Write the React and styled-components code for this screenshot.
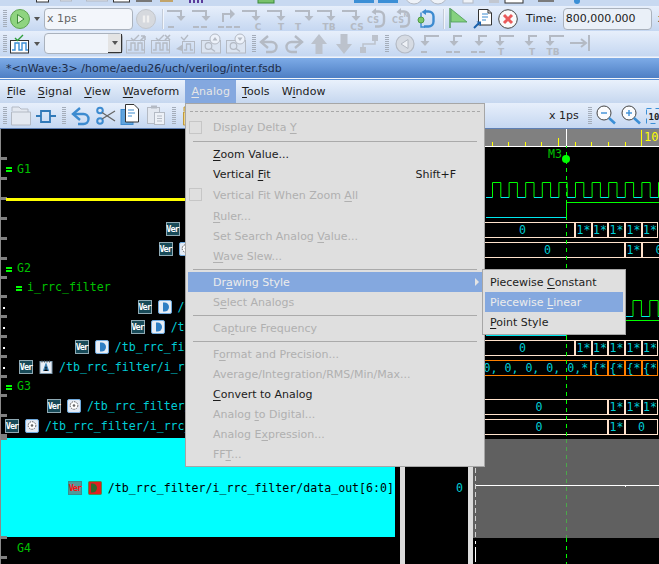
import styled, { createGlobalStyle } from "styled-components";

const GRAY = "#b4bac4";
const BLUE = "#3d8bd0";
const CYAN = "#00cdd6";
const PEACH = "#ffe2cc";
const ORANGE = "#ff7f00";
const GREEN = "#00ff00";
const MONO = '"DejaVu Sans Mono", monospace';

const GlobalStyle = createGlobalStyle`
  html, body { margin: 0; padding: 0; background: #000; }
  body { font-family: "DejaVu Sans", sans-serif; }
`;

const Page = styled.div`
  position: relative;
  width: 659px;
  height: 564px;
  overflow: hidden;
  display: flex;
  flex-direction: column;
  background: #dce6f6;
  font-size: 11px;
  color: #1c1c1c;
`;

const ClippedBar = styled.div`
  flex: none;
  height: 6px;
  overflow: hidden;
  background: #c8d9f1;
  svg { display: block; }
`;

const ToolRow = styled.div`
  flex: none;
  height: 25px;
  display: flex;
  align-items: center;
  gap: 3px;
  padding-left: 3px;
  overflow: hidden;
  background: linear-gradient(#e7effb, #c5d7f1);
`;

const IconGroup = styled.div`
  flex: none;
  display: flex;
  align-items: center;
  gap: 5px;
  svg { display: block; flex: none; width: 20px; height: 20px; overflow: visible; }
`;

const Grip = styled.div`
  flex: none;
  width: 4px;
  height: 18px;
  margin-right: ${(p) => p.$mr || 0}px;
  margin-left: ${(p) => p.$ml || 0}px;
  background: repeating-linear-gradient(#a4adba 0 1px, transparent 1px 2px);
`;

const Divider = styled.div`
  flex: none;
  width: 2px;
  height: 20px;
  margin-left: 3px;
  background: #f2f6fc;
  border-left: 1px solid #c4ccd8;
  box-sizing: border-box;
`;

const DropCaret = styled.div`
  flex: none;
  width: 0;
  height: 0;
  margin: 0 1px;
  border-left: 3.5px solid transparent;
  border-right: 3.5px solid transparent;
  border-top: 4px solid #555;
`;

const Field = styled.div`
  flex: none;
  box-sizing: border-box;
  width: ${(p) => p.$w}px;
  height: 22px;
  padding: 0 2px;
  display: flex;
  align-items: center;
  border: 1px solid #aab2bd;
  border-radius: 4px;
  background: ${(p) => (p.$muted ? "#f3f6fb" : "#eaf0f8")};
  color: ${(p) => (p.$muted ? "#666" : "#222")};
  font-size: 11px;
  margin-left: ${(p) => p.$ml || 0}px;
`;

const Combo = styled(Field)`
  justify-content: flex-end;
  padding: 0;
  height: 21px;
  background: #f0f4fa;
`;

const ComboButton = styled.div`
  width: 14px;
  height: 19px;
  display: flex;
  align-items: center;
  justify-content: center;
  background: #e4e4e4;
  border-right: 1px solid #333;
  border-bottom: 1px solid #333;
  box-sizing: border-box;
`;

const ToolLabel = styled.span`
  flex: none;
  margin-left: ${(p) => p.$ml || 0}px;
  font-size: 11px;
  color: #222;
`;

const TitleBar = styled.div`
  flex: none;
  height: 22px;
  box-sizing: border-box;
  margin-top: 1px;
  padding-left: 6px;
  display: flex;
  align-items: center;
  border-top: 1px solid #f0f4fa;
  border-bottom: 1px solid #f4f7fc;
  background: linear-gradient(#7dabe7, #4e7fc4);
  color: #1d2c47;
  font-size: 11px;
  box-shadow: 0 1px 0 #5b8fd4;
`;

const MenuBar = styled.div`
  flex: none;
  height: 23px;
  margin-top: 1px;
  padding-left: 1px;
  display: flex;
  background: linear-gradient(#e9f1fc, #c6d7ef);
`;

const MenuTitle = styled.div`
  padding: 0 6px;
  display: flex;
  align-items: center;
  font-size: 11px;
  letter-spacing: 0.1px;
  background: ${(p) => (p.$open ? "#84a8df" : "transparent")};
  color: ${(p) => (p.$open ? "#e6e6e6" : "#1c1c1c")};
`;

const Workspace = styled.div`
  flex: 1;
  min-height: 0;
  display: grid;
  grid-template-columns: 400px 5px 63px 5px 186px;
  background: #000;
  border-top: 1px solid #5e7fb3;
`;

const SignalPane = styled.div`
  display: flex;
  flex-direction: column;
  padding: 29px 5px 0 0;
  border-left: 1px solid #8a8a8a;
  box-sizing: border-box;
  overflow: hidden;
`;

const SignalRow = styled.div`
  position: relative;
  flex: none;
  box-sizing: border-box;
  height: ${(p) => p.$h || 20}px;
  padding-top: 1px;
  display: flex;
  align-items: center;
  justify-content: ${(p) => (p.$group ? "flex-start" : "flex-end")};
  background: ${(p) => (p.$selected ? "#00ffff" : "transparent")};
  white-space: nowrap;
  font-family: ${MONO};
  font-size: 11.6px;
  color: ${(p) => (p.$selected ? "#000" : CYAN)};
  &::before {
    content: "";
    position: absolute;
    left: 0;
    top: -1px;
    width: 6px;
    height: 3px;
    background: #808080;
  }
  &::after {
    content: "";
    position: absolute;
    left: 2px;
    top: 11px;
    width: 2px;
    height: 2px;
    background: #fff;
    display: ${(p) => (p.$dot ? "block" : "none")};
  }
`;

const SignalName = styled.span`
  margin-right: 1px;
`;

const YellowBar = styled.div`
  position: absolute;
  left: 5px;
  right: 0;
  top: 0;
  height: 3px;
  background: #ffff00;
`;

const GroupName = styled.span`
  color: #00c000;
  padding-left: ${(p) => p.$indent}px;
  display: flex;
  align-items: center;
  gap: 5px;
`;

const GroupMark = styled.i`
  width: 6px;
  height: 5px;
  margin-top: 2px;
  box-sizing: border-box;
  visibility: ${(p) => (p.$hidden ? "hidden" : "visible")};
  border-top: 2px solid ${GREEN};
  border-bottom: 2px solid ${GREEN};
`;

const VerBadge = styled.span`
  flex: none;
  box-sizing: border-box;
  width: 14px;
  height: 14px;
  margin-right: 6px;
  display: flex;
  align-items: center;
  justify-content: center;
  border: 1px solid ${(p) => (p.$selected ? "#3b8f8f" : "#8fa9b3")};
  background: ${(p) => (p.$selected ? "#4f9a9a" : "#184a58")};
  color: ${(p) => (p.$selected ? "#ff1010" : "#fff")};
  font-family: ${MONO};
  font-weight: bold;
  font-size: 8.5px;
  letter-spacing: -1px;
`;

const KindIcon = styled.svg`
  flex: none;
  width: 14px;
  height: 14px;
  margin-right: 6px;
`;

const Sash = styled.div`
  background: #dcdcdc;
`;

const ValuePane = styled.div`
  padding: 309px 5px 0 0;
  font-family: ${MONO};
  font-size: 11.6px;
  color: ${CYAN};
`;

const ValueRow = styled.div`
  height: 100px;
  display: flex;
  align-items: center;
  justify-content: flex-end;
`;

const WaveSvg = styled.svg`
  display: block;
  width: 186px;
  height: 435px;
`;

const Menu = styled.div`
  position: absolute;
  left: ${(p) => p.$left}px;
  top: ${(p) => p.$top}px;
  width: ${(p) => p.$w}px;
  box-sizing: border-box;
  padding: 2px;
  background: #dfdfdf;
  border: 1px solid #a6a6a6;
`;

const TearOff = styled.div`
  height: 6px;
  margin: 0 2px 5px;
  box-sizing: border-box;
  border-bottom: 1px dashed #a8a8a8;
`;

const MenuItem = styled.div`
  position: relative;
  height: ${(p) => p.$h || 20}px;
  padding-left: ${(p) => (p.$sub ? 5 : 25)}px;
  padding-right: 3px;
  display: flex;
  align-items: center;
  justify-content: space-between;
  white-space: nowrap;
  font-size: 11px;
  background: ${(p) => (p.$active ? "#84a8df" : "transparent")};
  color: ${(p) => (p.$active ? "#ececec" : p.$off ? "#b0b0b0" : "#1c1c1c")};
`;

const CheckBox = styled.i`
  position: absolute;
  left: 1px;
  top: 4px;
  width: 13px;
  height: 13px;
  box-sizing: border-box;
  border: 1px solid #c6c6c6;
`;

const Shortcut = styled.span`
  padding-right: 23px;
`;

const SubArrow = styled.i`
  width: 0;
  height: 0;
  border-top: 4px solid transparent;
  border-bottom: 4px solid transparent;
  border-left: 4px solid #e4e4e4;
`;

const MenuRule = styled.div`
  height: ${(p) => p.$h || 6}px;
  margin: 0 5px;
  position: relative;
  &::after {
    content: "";
    position: absolute;
    left: 0;
    right: 0;
    top: ${(p) => p.$at || 3}px;
    height: 1px;
    background: #aaa;
  }
`;

const U = styled.u`
  text-underline-offset: 2px;
`;

// toolbar drawings
const Svg = ({ children }) => <svg viewBox="0 0 20 20" fill="none">{children}</svg>;

const tinyText = { fontFamily: '"DejaVu Sans", sans-serif', fontSize: 9, fontWeight: "bold", fill: GRAY };

const BracketDown = ({ x = 0 }) => (
  <g stroke={GRAY} strokeWidth="2" transform={`translate(${x} 0)`}>
    <path d="M0 2H14V7" />
    <path d="M9.500 7h9L14 12z" fill={GRAY} strokeWidth="0" />
  </g>
);

const Dashes = ({ n }) => (
  <path stroke={GRAY} strokeWidth="2" d={[...Array(n)].map((_, i) => `M${1 + i * 8} 18h6`).join("")} />
);

const DownDash = ({ n }) => <Svg><BracketDown /><Dashes n={n} /></Svg>;
const UpDash = () => (
  <Svg>
    <path d="M6 13V5H14" stroke={GRAY} strokeWidth="2" />
    <path d="M13 0v10l5-5z" fill={GRAY} />
    <Dashes n={3} />
  </Svg>
);
const DownText = ({ t, tx = 10, shift = 0 }) => (
  <Svg>
    <BracketDown x={shift} />
    <text x={tx} y="21" textAnchor="middle" style={tinyText}>{t}</text>
  </Svg>
);
const LoopText = ({ n }) => (
  <Svg>
    <path d="M9 2.500h3a5 5 0 0 1 5 5v5a5 5 0 0 1-5 5H8" stroke={GRAY} strokeWidth="2.400" />
    <path d="M9 -1v7L4.500 3z" fill={GRAY} />
    <text x="6" y="14" textAnchor="middle" style={{ ...tinyText, fontSize: 8 }}>CS</text>
    {n && <text x="14" y="8" textAnchor="middle" style={{ ...tinyText, fontSize: 6 }}>N</text>}
  </Svg>
);
const BlueLoop = () => (
  <Svg>
    <path d="M8 2.500h3.500a5 5 0 0 1 5 5v5a5 5 0 0 1-5 5H7" stroke={BLUE} strokeWidth="2.400" />
    <path d="M9 0v6L4.500 3z" fill={BLUE} />
    <path d="M4 3.500v5M4 14v4h4" stroke={BLUE} strokeWidth="1.400" />
    <circle cx="4" cy="11" r="3" fill="#7cc86a" stroke="#4f9a42" />
  </Svg>
);
const Flag = () => (
  <Svg>
    <path d="M2 -1V19" stroke="#4a9a55" strokeWidth="1.400" />
    <path d="M3 0L19 13H3z" fill="#85d17f" stroke="#4a9a55" strokeWidth=".8" />
  </Svg>
);
const DocArrow = () => (
  <Svg>
    <path d="M5.500 0.500H15l3.500 3.500V16H5.500z" fill="#fff" stroke="#333" />
    <path d="M15 .5V4h3.500" stroke="#333" />
    <path d="M9 5h6M9 8h6M9 11h4" stroke={BLUE} />
    <path d="M1 19l5-5" stroke="#1c62ad" strokeWidth="2" />
    <path d="M3.500 12.500H8V17z" fill="#1c62ad" />
  </Svg>
);
const CloseBadge = () => (
  <Svg>
    <circle cx="10" cy="10" r="9.300" fill="#fafafa" stroke="#444" />
    <path d="M6 6l8 8M14 6l-8 8" stroke="#ea5a5a" strokeWidth="3" />
  </Svg>
);
const PlayBadge = () => (
  <Svg>
    <circle cx="10" cy="10" r="9.500" fill="#8fd480" stroke="#5fa552" />
    <path d="M7.500 5.500L14 10l-6.500 4.500z" fill="#dff3d8" stroke="#3f8a3a" />
  </Svg>
);
const PauseBadge = () => (
  <Svg>
    <circle cx="10" cy="10" r="9.500" fill="#d6d9de" stroke="#c2c6cc" />
    <path d="M8 6.500v7M12 6.500v7" stroke="#f0f0f0" strokeWidth="2.400" />
  </Svg>
);
const pulse = "M2 16h3V9h4v7h3V9h4v7h2";
const WaveCheck = ({ live, extra }) => {
  const line = live ? "#3b8fd6" : GRAY;
  return (
    <Svg>
      <rect x=".5" y="6.500" width="18" height="12.500" fill={live ? "#fff" : "none"} stroke={live ? "#333" : GRAY} />
      <path d={pulse} stroke={line} strokeWidth="1.400" />
      <path d="M5 4l2.500 2.500L13 1" stroke={live ? "#2e9e3a" : GRAY} strokeWidth="1.400" />
      {extra}
    </Svg>
  );
};
const FlyIn = () => (
  <Svg>
    <path d="M5 3l3 3 4-5" stroke={GRAY} strokeWidth="1.300" />
    <rect x="6.500" y="7.500" width="12" height="11.500" stroke={GRAY} />
    <path d="M8 16h2.500V10h4v6H17" stroke={GRAY} strokeWidth="1.300" />
    <path d="M0 15l7-5-1 7z" fill={GRAY} />
  </Svg>
);
const ZoomBox = ({ up }) => (
  <Svg>
    <rect x=".5" y="6.500" width="19" height="12.500" fill="#dbe4f1" stroke={GRAY} />
    <circle cx="7.500" cy="12" r="3.300" stroke={GRAY} strokeWidth="1.200" />
    <path d="M10 14.500l4 3" stroke={GRAY} strokeWidth="1.400" />
    <circle cx="14" cy="5" r="5" fill="#edf2fa" stroke={GRAY} />
    <path d={up ? "M11.500 6.500h5L14 3z" : "M11.500 3.500h5L14 7z"} fill={GRAY} />
  </Svg>
);
const Undo = ({ color = GRAY, flip }) => (
  <Svg>
    <g transform={flip ? "translate(20 0) scale(-1 1)" : undefined}>
      <path d="M3 8h9.500a5 5 0 0 1 0 10H7" stroke={color} strokeWidth="2.400" />
      <path d="M9 2L2 8l7 6" stroke={color} strokeWidth="2.400" />
    </g>
  </Svg>
);
const FatArrow = ({ down }) => (
  <Svg>
    <path transform={down ? "rotate(180 10 10)" : undefined} d="M10 0l8 10h-4.500v10h-7V10H2z" fill="#bcc2cc" />
  </Svg>
);
const StepPath = () => (
  <Svg>
    <rect x="13" y="1" width="6" height="6" fill="#bcc2cc" />
    <rect x="1" y="13" width="6" height="6" fill="#bcc2cc" />
    <path d="M4 13V10H16V7" stroke="#bcc2cc" strokeWidth="1.500" />
  </Svg>
);
const BackCircle = () => (
  <Svg>
    <circle cx="10" cy="10" r="9" fill="#d6dbe3" stroke={GRAY} strokeWidth="1.200" />
    <path d="M13 5.500v9L6 10z" fill="#eef1f6" stroke={GRAY} />
  </Svg>
);
const BracketLeft = ({ dashes, label, short, lx = 6 }) => (
  <Svg>
    <path d={short ? "M17 2H9V7" : "M19 2H5V7"} stroke={GRAY} strokeWidth="2" />
    <path d={short ? "M4.500 7h9L9 12z" : "M.5 7h9L5 12z"} fill={GRAY} />
    {dashes && <Dashes n={dashes} />}
    {label && <text x={lx} y="21" textAnchor="middle" style={tinyText}>{label}</text>}
  </Svg>
);
const ToEnd = () => (
  <Svg>
    <path d="M0 9h15" stroke={GRAY} strokeWidth="2" />
    <path d="M11 5l5 4-5 4" stroke={GRAY} strokeWidth="2" />
    <path d="M19 1v16" stroke={GRAY} strokeWidth="2" />
  </Svg>
);
const Folder = ({ color = GRAY, fill = "#e3e8f0" }) => (
  <Svg>
    <path d="M1 5V1h7l2 2h7v5" stroke={color} fill={fill} />
    <path d="M.5 6h19v13H.5z" fill={fill} stroke={color} />
  </Svg>
);
const StepIcon = () => (
  <Svg>
    <path d="M0 10h5V5h9v5h6M5 10v6h9v-6" stroke="#3179b8" strokeWidth="1.800" />
  </Svg>
);
const Scissors = () => (
  <Svg>
    <circle cx="4" cy="4.500" r="2.800" stroke={BLUE} strokeWidth="2" />
    <circle cx="4" cy="15" r="2.800" stroke={BLUE} strokeWidth="2" />
    <path d="M6 6.500L19 15M6 13L19 5" stroke="#666" strokeWidth="1.300" />
  </Svg>
);
const CopyDoc = () => (
  <Svg>
    <rect x="0" y="3.500" width="12" height="15" fill="#5fa3dd" stroke={BLUE} />
    <path d="M4.500 -1.500H13l4.500 4.500V16H4.500z" fill="#fff" stroke="#333" />
    <path d="M7 4h6M7 7h7M7 10h4" stroke={BLUE} />
  </Svg>
);
const PasteDoc = () => (
  <Svg>
    <rect x="1.500" y="1.500" width="12" height="16" stroke={GRAY} fill="#e3e8f0" />
    <rect x="5" y="-.5" width="6" height="3" fill={GRAY} />
    <rect x="8.500" y="6.500" width="10" height="12" fill="#edf1f7" stroke={GRAY} />
    <path d="M11 10h5M11 12.500h5M11 15h5" stroke={GRAY} />
  </Svg>
);
const Magnifier = ({ plus }) => (
  <Svg>
    <circle cx="8" cy="7" r="7" fill="#fbfcfe" stroke="#444" />
    <path d="M5 7h6" stroke="#3b8fd6" strokeWidth="1.400" />
    {plus && <path d="M8 4v6" stroke="#3b8fd6" strokeWidth="1.400" />}
    <path d="M13 12l6 5.500" stroke="#3b8fd6" strokeWidth="2.600" />
  </Svg>
);
const TenBox = () => (
  <Svg>
    <rect x=".5" y="2.500" width="24" height="15" stroke="#3b8fd6" strokeDasharray="5 4" />
    <text x="2.500" y="14" style={{ fontFamily: MONO, fontSize: 9, fontWeight: "bold", fill: "#222" }}>10</text>
  </Svg>
);

const TopFragments = () => (
  <svg width="659" height="6" viewBox="0 0 659 6" fill="none">
    {[[36, 12], [113, 16]].map(([x, w]) => (
      <rect key={x} x={x + 0.5} y="-6" width={w} height="8" fill="#fff" stroke="#333" />
    ))}
    {[[60, 11], [86, 21]].map(([x, w]) => (
      <rect key={x} x={x + 0.5} y="-6" width={w} height="7" fill="#dfe4ec" stroke={GRAY} />
    ))}
    <rect x="136" y="0" width="16" height="2" fill="#777" />
    <rect x="160" y="0" width="13" height="2" fill="#c2a46a" />
    <path d="M190 0v3M194 0v3M198 0v3M202 0v3" stroke="#5b3c9c" strokeWidth="2" />
    <rect x="258" y="-2" width="16" height="5" fill="#79c26c" stroke="#3a8a3a" />
    <rect x="354" y="0" width="20" height="3" fill="#3b8fd6" />
    <rect x="378" y="0" width="20" height="3" fill="#3b8fd6" />
    <circle cx="414" cy="-5" r="9" fill="#eef2f8" stroke={GRAY} />
    <circle cx="438" cy="-5" r="9" fill="#eef2f8" stroke={GRAY} />
    <rect x="463" y="-2" width="10" height="5" fill="#eef2f8" stroke={GRAY} />
    <rect x="489" y="-2" width="10" height="5" fill="#c2c7d0" />
    <rect x="505" y="-4" width="18" height="7" fill="#fff" stroke="#333" />
    <rect x="538" y="-2" width="16" height="4" fill="#7b7b7b" />
    <circle cx="577" cy="1" r="3" fill="#3b8fd6" />
  </svg>
);

// kinds of signal icon
const ArrowKind = () => (
  <KindIcon viewBox="0 0 14 14">
    <rect x=".5" y=".5" width="13" height="13" rx="1.500" fill="#e8eef6" stroke="#6ea8dc" />
    <path d="M5 2.500h1.500a4.500 4.500 0 0 1 0 9H5z" fill="#2f7fc4" />
  </KindIcon>
);
const GearKind = () => (
  <KindIcon viewBox="0 0 14 14">
    <rect x=".5" y=".5" width="13" height="13" rx="1.500" fill="#e3eaf4" stroke="#6ea8dc" />
    <circle cx="7" cy="6.500" r="3.800" fill="#fff" stroke="#555" strokeDasharray="1.500 1" />
    <circle cx="7" cy="6.500" r="1.300" fill="#666" />
  </KindIcon>
);
const NoteKind = () => (
  <KindIcon viewBox="0 0 14 14">
    <rect x="1" y="1.500" width="12" height="12" fill="#e8eef5" stroke="#7a97ac" />
    <path d="M3 .5v2M5.500 .5v2M8 .5v2M10.500 .5v2" stroke="#555" />
    <path d="M4.500 11L7 4l2.500 7M5.500 9h3" stroke="#3d85b8" strokeWidth="1.200" />
  </KindIcon>
);
const RedKind = () => (
  <KindIcon viewBox="0 0 14 14">
    <rect x=".5" y=".5" width="13" height="13" rx="1" fill="#e02020" stroke="#4f8a4f" />
    <path d="M3 2.500h1.500a4.500 4.500 0 0 1 0 9H3z" fill="#2f6a2f" />
  </KindIcon>
);

const Signal = ({ Kind, name, dot, h, selected }) => (
  <SignalRow $dot={dot} $h={h} $selected={selected}>
    <VerBadge $selected={selected}>Ver</VerBadge>
    <Kind />
    <SignalName>{name}</SignalName>
  </SignalRow>
);

const Group = ({ name, indent = 5, mark = true, h }) => (
  <SignalRow $group $h={h}>
    <GroupName $indent={indent}>
      <GroupMark $hidden={!mark} />
      <span>{name}</span>
    </GroupName>
  </SignalRow>
);

// one bus row of the wave pane, in page coordinates
const Bus = ({ y, color = PEACH, segs }) => (
  <g>
    {segs.map(([a, b, text], i) => (
      <g key={i}>
        <rect x={a + 0.5} y={y + 0.5} width={b - a - 1} height={15} fill="#000" stroke={color} />
        <text
          x={(a + b) / 2}
          y={y + 12}
          textAnchor="middle"
          style={{ fontFamily: MONO, fontSize: 11.6, fill: CYAN }}
        >
          {text}
        </text>
      </g>
    ))}
  </g>
);

const starSegs = (label, ...xs) => xs.slice(0, -1).map((x, i) => [x, xs[i + 1], label]);

// digital trace: low segments are cyan, high ones green
const Clock = ({ top, bottom, from, to, start, step = 8.3 }) => {
  const parts = [];
  let high = false;
  let x = from;
  let next = start;
  while (x < to) {
    const end = Math.min(next, to);
    parts.push(<path key={x} d={`M${x} ${high ? top : bottom}H${end}`} stroke={high ? GREEN : "#00e8f0"} />);
    if (end < to) parts.push(<path key={`e${x}`} d={`M${end} ${top}V${bottom}`} stroke={GREEN} />);
    x = end;
    next = x + step;
    high = !high;
  }
  return <g>{parts}</g>;
};

const WavePane = () => (
  <WaveSvg viewBox="473 129 186 435" fill="none">
    <rect x="473" y="129" width="186" height="17" fill="#808080" />
    <path d="M473 146.500H659" stroke="#fff" />
    <path d="M566.500 129V146" stroke="#fff" />
    {[492, 508, 525, 541, 558, 575, 591, 608, 625].map((x) => (
      <path key={x} d={`M${x}.5 ${x === 558 ? 138 : 142}V146`} stroke="#ffff00" />
    ))}
    <path d="M641.500 130V146" stroke="#ffff00" />
    <text x="644" y="141" style={{ fontFamily: MONO, fontSize: 12, fill: "#ffff00" }}>10</text>

    <text x="548" y="158" style={{ fontFamily: MONO, fontSize: 11.6, fill: "#00c000" }}>M3</text>

    <rect x="473" y="439" width="186" height="99" fill="#606060" />
    <path d="M475.500 468V540" stroke="#d0d0d0" strokeDasharray="5 3" />
    <path d="M475.500 541v3M475.500 547v15" stroke="#fff" />
    <path d="M476 485.500H659" stroke="#fff" />
    <path d="M625.500 485v2" stroke="#fff" />

    <Clock top={182.5} bottom={197.5} from={486} to={659} start={492.5} />
    <path d="M486 217.500H566" stroke="#00e8f0" />
    <path d="M566.500 218V202.500H659" stroke={GREEN} />

    <Bus y={222} segs={[[470, 575, "0"], ...starSegs("1*", 575, 592, 608, 625, 642, 658)]} />
    <Bus y={242} segs={[[470, 625, "0"], [625, 642, "1*"], [642, 676, "0"]]} />
    <Clock top={300.5} bottom={316.5} from={625} to={659} start={633} step={8.4} />
    <path d="M486 335.500H566" stroke="#00e8f0" />
    <path d="M566.500 336V320.500H659" stroke={GREEN} />
    <Bus y={340} segs={[[470, 575, "0"], ...starSegs("1*", 575, 592, 608, 625, 642, 658)]} />
    <Bus y={360} color={ORANGE} segs={[[470, 591, ""], ...starSegs("{*", 591, 608, 625, 642, 658)]} />
    <text x="483.500" y="372" style={{ fontFamily: MONO, fontSize: 11.6, fill: CYAN }}>0, 0, 0, 0, 0,*</text>
    <Bus y={399} segs={[[470, 608, "0"], ...starSegs("1*", 608, 625, 642, 658)]} />
    <Bus y={419} segs={[[470, 608, "0"], [608, 625, "1*"], [625, 658, "0"]]} />

    <path d="M566.500 146V439" stroke={GREEN} strokeDasharray="4 4" strokeDashoffset="2" />
    <path d="M566.500 439V538" stroke="#4aa84a" strokeDasharray="4 4" />
    <path d="M566.500 538V564" stroke={GREEN} strokeDasharray="4 4" />
    <circle cx="566" cy="159" r="4" fill={GREEN} />
  </WaveSvg>
);

const App = () => (
  <Page>
    <GlobalStyle />
    <ClippedBar><TopFragments /></ClippedBar>
    <ToolRow>
      <Grip />
      <IconGroup><PlayBadge /></IconGroup>
      <DropCaret />
      <Field $w={89} $muted>x 1ps</Field>
      <IconGroup><PauseBadge /></IconGroup>
      <Divider />
      <IconGroup>
        <DownDash n={1} />
        <DownDash n={2} />
        <UpDash />
        <DownText t="C" tx={16} />
        <DownText t="T" tx={14} />
        <DownText t="T" tx={6} shift={3} />
        <DownText t="TB" tx={12} />
        <DownText t="CS" tx={15} />
        <LoopText />
        <LoopText n />
        <BlueLoop />
      </IconGroup>
      <Divider />
      <IconGroup>
        <Flag />
        <DocArrow />
        <CloseBadge />
      </IconGroup>
      <ToolLabel $ml={5}>Time:</ToolLabel>
      <Field $w={89} $ml={3}>800,000,000</Field>
      <ToolLabel $ml={3}>x</ToolLabel>
    </ToolRow>
    <ToolRow>
      <Grip />
      <IconGroup><WaveCheck live /></IconGroup>
      <DropCaret />
      <Combo $w={79}>
        <ComboButton><DropCaret /></ComboButton>
      </Combo>
      <IconGroup>
        <WaveCheck extra={<path d="M14 7l5-5M19 2h-4M19 2v4" stroke={GRAY} strokeWidth="1.600" />} />
        <WaveCheck extra={<path d="M14 1l5 5M19 1l-5 5" stroke={GRAY} strokeWidth="1.600" />} />
        <FlyIn />
        <ZoomBox up />
        <ZoomBox />
      </IconGroup>
      <Grip $ml={3} />
      <IconGroup>
        <Undo />
        <Undo flip />
        <FatArrow />
        <FatArrow down />
        <StepPath />
      </IconGroup>
      <Grip $ml={3} $mr={3} />
      <IconGroup>
        <BackCircle />
        <BracketLeft dashes={1} />
        <BracketLeft dashes={2} short />
        <BracketLeft dashes={2} short />
        <BracketLeft label="T" />
        <BracketLeft label="T" short lx={12} />
        <BracketLeft label="TB" lx={8} />
        <ToEnd />
      </IconGroup>
    </ToolRow>
    <TitleBar>*&lt;nWave:3&gt; /home/aedu26/uch/verilog/inter.fsdb</TitleBar>
    <MenuBar>
      <MenuTitle><span><U>F</U>ile</span></MenuTitle>
      <MenuTitle><span><U>S</U>ignal</span></MenuTitle>
      <MenuTitle><span><U>V</U>iew</span></MenuTitle>
      <MenuTitle><span><U>W</U>aveform</span></MenuTitle>
      <MenuTitle $open><span><U>A</U>nalog</span></MenuTitle>
      <MenuTitle><span><U>T</U>ools</span></MenuTitle>
      <MenuTitle><span>W<U>i</U>ndow</span></MenuTitle>
    </MenuBar>
    <ToolRow>
      <Grip $mr={1} />
      <IconGroup>
        <Folder />
        <StepIcon />
      </IconGroup>
      <Grip $ml={3} $mr={2} />
      <IconGroup>
        <Undo color={BLUE} />
        <Scissors />
        <CopyDoc />
        <PasteDoc />
      </IconGroup>
      <Grip $ml={3} $mr={4} />
      <IconGroup><Folder color="#c09a3a" fill="#f0d488" /></IconGroup>
      <ToolLabel $ml={343}>x 1ps</ToolLabel>
      <Grip $ml={6} $mr={1} />
      <IconGroup>
        <Magnifier />
        <Magnifier plus />
        <TenBox />
      </IconGroup>
    </ToolRow>
    <Workspace>
      <SignalPane>
        <Group name="G1" />
        <SignalRow />
        <SignalRow><YellowBar /></SignalRow>
        <Signal Kind={ArrowKind} name="/tb_rrc_filter/i_rrc_filter" />
        <Signal Kind={GearKind} name="/tb_rrc_filter/i_rrc_filter/" />
        <Group name="G2" h={19} />
        <Group name="i_rrc_filter" indent={15} h={19} />
        <Signal Kind={ArrowKind} dot name="/tb_rrc_filter/i_rrc_filter/clk" />
        <Signal Kind={ArrowKind} dot name="/tb_rrc_filter/i_rrc_filter/rstn" />
        <Signal Kind={ArrowKind} dot name="/tb_rrc_filter/i_rrc_filter/data_in[7:0]" />
        <Signal Kind={NoteKind} dot name="/tb_rrc_filter/i_rrc_filter/coef_array[7:0][6:0]" />
        <Group name="G3" h={19} />
        <Signal Kind={GearKind} name="/tb_rrc_filter/i_rrc_filter/mult_out_r[15:0]" />
        <Signal Kind={GearKind} name="/tb_rrc_filter/i_rrc_filter/add_tree_out_reg[15:0]" />
        <SignalRow $h={3} />
        <Signal Kind={RedKind} selected h={99} name="/tb_rrc_filter/i_rrc_filter/data_out[6:0]" />
        <Group name="G4" mark={false} />
        <SignalRow />
      </SignalPane>
      <Sash />
      <ValuePane><ValueRow>0</ValueRow></ValuePane>
      <Sash />
      <WavePane />
    </Workspace>

    <Menu $left={185} $top={103} $w={300}>
      <TearOff />
      <MenuItem $off><CheckBox /><span>Display Delta <U>Y</U></span></MenuItem>
      <MenuRule $h={7} $at={4} />
      <MenuItem><span><U>Z</U>oom Value...</span></MenuItem>
      <MenuItem><span>Vertical <U>F</U>it</span><Shortcut>Shift+F</Shortcut></MenuItem>
      <MenuItem $off $h={22}><CheckBox /><span>Vertical Fit When Zoom <U>A</U>ll</span></MenuItem>
      <MenuItem $off><span><U>R</U>uler...</span></MenuItem>
      <MenuItem $off><span>Set Search Analog <U>V</U>alue...</span></MenuItem>
      <MenuItem $off><span><U>W</U>ave Slew...</span></MenuItem>
      <MenuRule />
      <MenuItem $active><span>Dr<U>a</U>wing Style</span><SubArrow /></MenuItem>
      <MenuItem $off><span>S<U>e</U>lect Analogs</span></MenuItem>
      <MenuRule />
      <MenuItem $off><span>Ca<U>p</U>ture Frequency</span></MenuItem>
      <MenuRule />
      <MenuItem $off><span>F<U>o</U>rmat and Precision...</span></MenuItem>
      <MenuItem $off><span>Average/Integration/RMS/Min/Max...</span></MenuItem>
      <MenuItem><span><U>C</U>onvert to Analog</span></MenuItem>
      <MenuItem $off><span>Analog <U>t</U>o Digital...</span></MenuItem>
      <MenuItem $off><span>Analog E<U>x</U>pression...</span></MenuItem>
      <MenuItem $off><span>FF<U>T</U>...</span></MenuItem>
    </Menu>
    <Menu $left={482} $top={269} $w={144}>
      <MenuItem $sub><span>Piecewise <U>C</U>onstant</span></MenuItem>
      <MenuItem $sub $active><span>Piecewise <U>L</U>inear</span></MenuItem>
      <MenuItem $sub><span><U>P</U>oint Style</span></MenuItem>
    </Menu>
  </Page>
);

export default App;
